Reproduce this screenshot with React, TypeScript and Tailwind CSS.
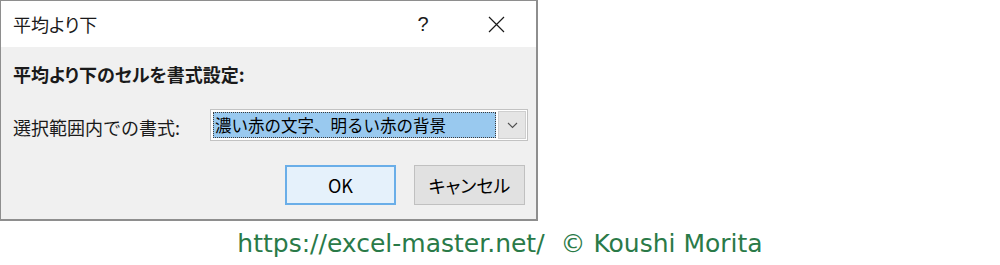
export default function App() {
  const jp = { fontFamily: '"Noto Sans CJK JP", "Noto Sans", sans-serif' };

  return (
    <div className="w-[1000px] h-[265px] bg-white flex flex-col overflow-hidden">
      {/* dialog */}
      <div
        className="w-[538px] h-[221px] border border-[#8e8e8e] border-r-2 border-b-2 flex flex-col text-[#1a1a1a]"
        style={jp}
      >
        {/* title bar */}
        <div className="h-[46px] bg-white flex items-center pl-[12px] shrink-0">
          <span className="text-[18px] leading-none [font-feature-settings:'palt']">平均より下</span>
          <span className="ml-auto w-[24px] text-center text-[20px] leading-none" style={{ fontFamily: '"Liberation Sans", sans-serif' }}>?</span>
          <span className="ml-[49px] mr-[28px] w-[24px] flex items-center justify-center">
            <svg width="17" height="17" viewBox="0 0 17 17" fill="none" stroke="#1a1a1a" strokeWidth="1.2">
              <path d="M1 1L16 16M16 1L1 16" />
            </svg>
          </span>
        </div>

        {/* body */}
        <div className="flex-1 bg-[#f0f0f0] flex flex-col pl-[12px]">
          <div className="mt-[15px] h-[24px] leading-[24px] text-[18px] font-bold [font-feature-settings:'palt']">平均より下のセルを書式設定:</div>

          <div className="mt-[23px] flex items-center h-[32px]">
            <span className="w-[197px] text-[18px] leading-[24px] pt-[3px]">選択範囲内での書式:</span>
            <div className="w-[318px] h-[32px] border border-[#c2c2c2] bg-white flex items-stretch p-[2px]">
              <div className="flex-1 bg-[#99c9ef] border border-dotted border-[#3c3c3c] flex items-center pl-[1px] text-[16.5px] leading-none text-black">
                濃い赤の文字、明るい赤の背景
              </div>
              <div className="w-[28px] ml-[2px] -my-[1px] -mr-[1px] bg-[#e5e5e5] border border-[#cfcfcf] flex items-center justify-center">
                <svg width="11" height="7" viewBox="0 0 11 7" fill="none" stroke="#505050" strokeWidth="1.1">
                  <path d="M1 1L5.5 5.5L10 1" />
                </svg>
              </div>
            </div>
          </div>

          <div className="mt-[24px] flex justify-end gap-[18px] pr-[11px] [font-feature-settings:'palt']">
            <button className="w-[111px] h-[40px] bg-[#e5f1fb] border-2 border-[#6aaee8] text-[18px] text-black">OK</button>
            <button className="w-[111px] h-[40px] bg-[#e1e1e1] border border-[#c0c0c0] text-[18px] text-black">キャンセル</button>
          </div>
        </div>
      </div>

      {/* footer credit */}
      <div
        className="mt-[8px] text-center text-[25px] leading-[30px] text-[#2a7a48] whitespace-pre"
        style={{ fontFamily: '"DejaVu Sans", sans-serif' }}
      >
        {"https://excel-master.net/  © Koushi Morita"}
      </div>
    </div>
  );
}
